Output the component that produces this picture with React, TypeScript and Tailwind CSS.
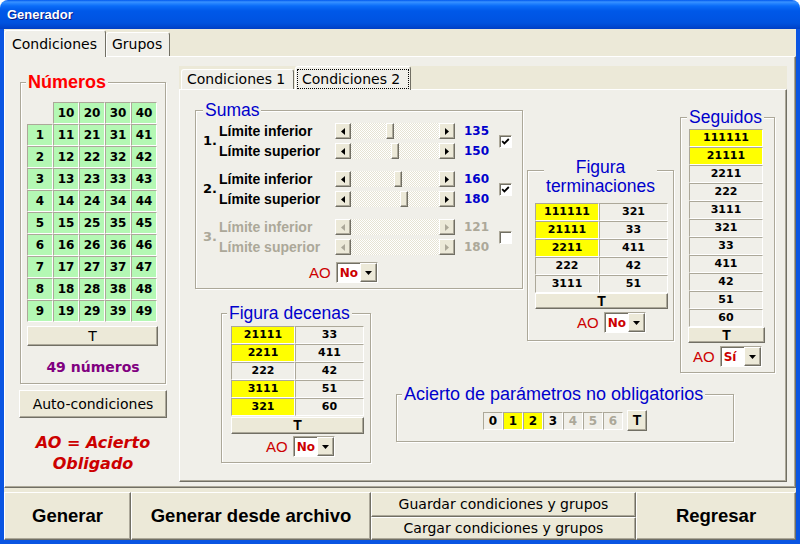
import React from "react";

const DJ = "font-['DejaVu_Sans',sans-serif]";
const LS = "font-['Liberation_Sans',Arial,sans-serif]";
const RAISED =
  "border border-t-white border-l-white border-r-[#716F64] border-b-[#716F64] shadow-[inset_-1px_-1px_0_#ACA899]";
const SUNKEN =
  "border border-t-[#ACA899] border-l-[#ACA899] border-r-white border-b-white";
const FRAME =
  "min-w-0 border border-[#ACA899] shadow-[inset_1px_1px_0_#ffffff,1px_1px_0_#ffffff]";
const LEGEND =
  "bg-[#F0EFE9] px-[2px] leading-[18px] text-[17.5px] text-[#0000CC] font-['Liberation_Sans',Arial,sans-serif]";

function ArrowBtn({ dir, disabled }: { dir: "l" | "r"; disabled?: boolean }) {
  return (
    <div className={`w-[16px] h-[16px] shrink-0 bg-[#ECE9D8] ${RAISED} flex items-center justify-center`}>
      <svg width="4" height="7" viewBox="0 0 4 7">
        <polygon
          points={dir === "l" ? "0,3.5 4,0 4,7" : "4,3.5 0,0 0,7"}
          fill={disabled ? "#ACA899" : "#000000"}
        />
      </svg>
    </div>
  );
}

function HScroll({ thumb, disabled }: { thumb?: number; disabled?: boolean }) {
  return (
    <div className="flex h-[16px] w-[120px] shrink-0">
      <ArrowBtn dir="l" disabled={disabled} />
      <div className="flex-1 flex bg-[image:repeating-conic-gradient(#ffffff_0%_25%,#E6E3D3_0%_50%)] bg-[length:2px_2px]">
        {thumb !== undefined && (
          <div className={`w-[8px] h-[16px] bg-[#ECE9D8] ${RAISED}`} style={{ marginLeft: thumb }} />
        )}
      </div>
      <ArrowBtn dir="r" disabled={disabled} />
    </div>
  );
}

function Check({ checked }: { checked?: boolean }) {
  return (
    <div className={`w-[13px] h-[13px] shrink-0 ${SUNKEN} shadow-[inset_1px_1px_0_#716F64] bg-white flex items-center justify-center`}>
      {checked && (
        <svg width="9" height="9" viewBox="0 0 9 9">
          <polyline points="1.2,4.2 3.4,6.4 7.8,2" fill="none" stroke="#000" strokeWidth="1.8" />
        </svg>
      )}
    </div>
  );
}

function Combo({ value }: { value: string }) {
  return (
    <div className={`flex h-[21px] w-[42px] shrink-0 ${SUNKEN} shadow-[inset_1px_1px_0_#716F64] bg-white`}>
      <div className={`flex-1 flex items-center pl-[3px] text-[#CC0000] font-bold text-[12px] ${DJ}`}>{value}</div>
      <div className={`w-[17px] bg-[#ECE9D8] ${RAISED} flex items-center justify-center`}>
        <svg width="7" height="4" viewBox="0 0 7 4">
          <polygon points="0,0 7,0 3.5,4" fill="#000" />
        </svg>
      </div>
    </div>
  );
}

function AO({ value, pl }: { value: string; pl: string }) {
  return (
    <div className={`flex items-center gap-[5px] ${pl}`}>
      <span className={`${LS} text-[15px] text-[#CC0000] leading-none`}>AO</span>
      <Combo value={value} />
    </div>
  );
}

function SumRow({
  label,
  thumb,
  value,
  disabled,
}: {
  label: string;
  thumb?: number;
  value: string;
  disabled?: boolean;
}) {
  return (
    <div className="flex items-center h-[20px]">
      <div className={`w-[116px] ${LS} font-bold text-[14px] ${disabled ? "text-[#ACA899]" : "text-black"}`}>{label}</div>
      <HScroll thumb={thumb} disabled={disabled} />
      <div className={`ml-[9px] w-[35px] ${DJ} font-bold text-[12px] ${disabled ? "text-[#ACA899]" : "text-[#0000CC]"}`}>
        {value}
      </div>
    </div>
  );
}

function SumGroup({
  n,
  a,
  b,
  checked,
  disabled,
}: {
  n: string;
  a: [number | undefined, string];
  b: [number | undefined, string];
  checked?: boolean;
  disabled?: boolean;
}) {
  return (
    <div className="flex items-center h-[40px]">
      <div className={`w-[23px] pl-[7px] ${DJ} font-bold text-[13px] ${disabled ? "text-[#ACA899]" : "text-black"}`}>{n}</div>
      <div className="flex flex-col">
        <SumRow label="Límite inferior" thumb={a[0]} value={a[1]} disabled={disabled} />
        <SumRow label="Límite superior" thumb={b[0]} value={b[1]} disabled={disabled} />
      </div>
      <Check checked={checked} />
    </div>
  );
}

function FigTable({ rows }: { rows: [string, string, boolean][] }) {
  return (
    <div className="flex flex-col w-[133px]">
      {rows.map(([a, b, y], i) => (
        <div key={i} className="flex h-[18px]">
          <div
            className={`w-[64px] ${SUNKEN} ${y ? "bg-[#FFFF00]" : "bg-[#F0EFE9]"} flex items-center justify-center ${DJ} font-bold text-[11px] text-black`}
          >
            {a}
          </div>
          <div className={`flex-1 ${SUNKEN} bg-[#F0EFE9] flex items-center justify-center ${DJ} font-bold text-[11px] text-black`}>
            {b}
          </div>
        </div>
      ))}
    </div>
  );
}

function TBtn({ w, h }: { w: string; h: string }) {
  return (
    <div className={`${w} ${h} bg-[#ECE9D8] ${RAISED} flex items-center justify-center ${LS} font-bold text-[14px] text-black`}>
      T
    </div>
  );
}

export default function App() {
  const numRows: (number | null)[][] = [[null, 10, 20, 30, 40]];
  for (let r = 1; r <= 9; r++) numRows.push([r, 10 + r, 20 + r, 30 + r, 40 + r]);
  const cells = numRows.flat();

  const seguidos: [string, boolean][] = [
    ["111111", true],
    ["21111", true],
    ["2211", false],
    ["222", false],
    ["3111", false],
    ["321", false],
    ["33", false],
    ["411", false],
    ["42", false],
    ["51", false],
    ["60", false],
  ];

  return (
    <div className={`w-[800px] h-[544px] bg-white overflow-hidden ${DJ} text-black`}>
      <div className="w-[800px] h-[544px] flex flex-col rounded-t-[8px] overflow-hidden">
        {/* Title bar */}
        <div className="h-[29px] shrink-0 flex items-center pl-[7px] bg-[image:linear-gradient(to_bottom,#0058EE_0px,#3A93FF_2px,#2A88FF_3px,#0A6CF8_6px,#0058E8_11px,#0055E4_18px,#0052DE_23px,#0049D2_26px,#003FC4_29px)]">
          <span className={`${LS} font-bold text-[13px] text-white [text-shadow:1px_1px_0_#0A1883]`}>Generador</span>
        </div>

        {/* Window frame */}
        <div className="flex-1 flex flex-col bg-[#0A55E2] px-[4px] pb-[4px]">
          <div className="flex-1 flex flex-col bg-[#ECE9D8]">
            {/* Outer tabs */}
            <div className="flex items-end h-[27px] shrink-0">
              <div className="relative z-10 -mb-px h-[27px] w-[102px] bg-[#F0EFE9] border-t border-l border-r border-t-white border-l-white border-r-[#716F64] rounded-t-[3px] flex items-center pl-[7px] text-[14px]">
                Condiciones
              </div>
              <div className="h-[24px] w-[64px] bg-[#F0EFE9] border-t border-l border-r border-t-white border-l-white border-r-[#716F64] rounded-t-[3px] flex items-center pl-[5px] text-[14px]">
                Grupos
              </div>
            </div>

            {/* Outer panel */}
            <div className="h-[432px] shrink-0 bg-[#F0EFE9] border border-t-white border-l-white border-r-[#716F64] border-b-[#716F64] shadow-[inset_-1px_-1px_0_#ACA899] flex">
              {/* Left column */}
              <div className="ml-[14px] w-[148px] pt-[15px] flex flex-col">
                <fieldset className={`${FRAME} ml-[1px] w-[146px] pb-[6px]`}>
                  <legend className={`ml-[5px] px-[2px] bg-[#F0EFE9] ${LS} font-bold text-[18px] leading-[20px] text-[#FF0000]`}>
                    Números
                  </legend>
                  <div className="ml-[6px] mt-[10px] grid grid-cols-[repeat(5,26px)]">
                    {cells.map((c, i) =>
                      c === null ? (
                        <div key={i} className="h-[22px]" />
                      ) : (
                        <div
                          key={i}
                          className={`h-[22px] ${SUNKEN} bg-[#B4F8B4] flex items-center justify-center font-bold text-[12px] text-black`}
                        >
                          {c}
                        </div>
                      )
                    )}
                  </div>
                  <div className={`ml-[6px] mt-[4px] w-[131px] h-[20px] bg-[#ECE9D8] ${RAISED} flex items-center justify-center text-[14px]`}>
                    T
                  </div>
                  <div className="mt-[11px] h-[20px] flex items-center justify-center font-bold text-[14px] text-[#800080]">
                    49 números
                  </div>
                </fieldset>
                <div className={`mt-[6px] w-[148px] h-[28px] bg-[#ECE9D8] ${RAISED} flex items-center justify-center text-[14px]`}>
                  Auto-condiciones
                </div>
                <div className="mt-[14px] text-center font-bold italic text-[16px] leading-[21px] text-[#CC0000]">
                  AO = Acierto
                  <br />
                  Obligado
                </div>
              </div>

              {/* Inner tab control */}
              <div className="ml-[12px] mt-[9px] w-[608px] flex flex-col">
                <div className="flex items-end h-[23px] bg-[#ECE9D8]">
                  <div className="ml-[2px] h-[20px] w-[113px] bg-[#F0EFE9] border-t border-l border-r border-t-white border-l-white border-r-[#716F64] rounded-t-[3px] flex items-center pl-[5px] text-[14px]">
                    Condiciones 1
                  </div>
                  <div className="ml-[1px] relative z-10 -mb-px h-[24px] w-[116px] bg-[#F0EFE9] border-t border-l border-r border-t-white border-l-white border-r-[#716F64] rounded-t-[3px] flex px-[1px] pt-[2px] pb-[1px]">
                    <span className="flex-1 flex items-center border border-dotted border-black pl-[4px] text-[14px]">
                      Condiciones 2
                    </span>
                  </div>
                </div>
                <div className="h-[393px] bg-[#F0EFE9] border border-t-white border-l-white border-r-[#716F64] border-b-[#716F64] shadow-[inset_-1px_-1px_0_#ACA899] grid grid-cols-[15px_26px_150px_25px_127px_4px_147px_6px_54px_41px] grid-rows-[11px_7px_50px_131px_15px_37px_32px_12px_57px_21px] content-start justify-start">
                  {/* Sumas */}
                  <fieldset className={`${FRAME} col-start-2 col-end-6 row-start-2 row-end-5`}>
                    <legend className={`ml-[7px] ${LEGEND}`}>Sumas</legend>
                    <div className="flex flex-col pt-[2px]">
                      <SumGroup n="1." a={[35, "135"]} b={[40, "150"]} checked />
                      <div className="h-[8px]" />
                      <SumGroup n="2." a={[43, "160"]} b={[49, "180"]} checked />
                      <div className="h-[8px]" />
                      <SumGroup n="3." a={[undefined, "121"]} b={[undefined, "180"]} disabled />
                      <div className="mt-[5px]">
                        <AO value="No" pl="pl-[113px]" />
                      </div>
                    </div>
                  </fieldset>

                  {/* Figura terminaciones */}
                  <fieldset className={`${FRAME} col-start-7 col-end-8 row-start-4 row-end-7`}>
                    <legend className={`mx-auto ${LEGEND}`}>
                      <div className="-mb-[14px] leading-[19px] text-center">
                        Figura
                        <br />
                        terminaciones
                      </div>
                    </legend>
                    <div className="pl-[7px] pt-[21px] flex flex-col">
                      <FigTable
                        rows={[
                          ["111111", "321", true],
                          ["21111", "33", true],
                          ["2211", "411", true],
                          ["222", "42", false],
                          ["3111", "51", false],
                        ]}
                      />
                      <TBtn w="w-[133px]" h="h-[16px]" />
                      <div className="mt-[3px]">
                        <AO value="No" pl="pl-[42px]" />
                      </div>
                    </div>
                  </fieldset>

                  {/* Seguidos */}
                  <fieldset className={`${FRAME} col-start-9 col-end-11 row-start-3 row-end-8`}>
                    <legend className={`ml-[6px] ${LEGEND}`}>Seguidos</legend>
                    <div className="pt-[3px] flex flex-col">
                      <div className="ml-[8px] w-[74px] flex flex-col">
                        {seguidos.map(([t, y], i) => (
                          <div
                            key={i}
                            className={`h-[18px] ${SUNKEN} ${y ? "bg-[#FFFF00]" : "bg-[#F0EFE9]"} flex items-center justify-center font-bold text-[11px] text-black`}
                          >
                            {t}
                          </div>
                        ))}
                      </div>
                      <div className="ml-[7px]">
                        <TBtn w="w-[77px]" h="h-[16px]" />
                      </div>
                      <div className="mt-[3px]">
                        <AO value="Sí" pl="pl-[12px]" />
                      </div>
                    </div>
                  </fieldset>

                  {/* Figura decenas */}
                  <fieldset className={`${FRAME} col-start-3 col-end-4 row-start-6 row-end-11`}>
                    <legend className={`ml-[5px] ${LEGEND}`}>Figura decenas</legend>
                    <div className="pl-[9px] pt-[4px] flex flex-col">
                      <FigTable
                        rows={[
                          ["21111", "33", true],
                          ["2211", "411", true],
                          ["222", "42", false],
                          ["3111", "51", true],
                          ["321", "60", true],
                        ]}
                      />
                      <div className="mt-[1px]">
                        <TBtn w="w-[133px]" h="h-[17px]" />
                      </div>
                      <div className="mt-[2px]">
                        <AO value="No" pl="pl-[35px]" />
                      </div>
                    </div>
                  </fieldset>

                  {/* Acierto */}
                  <fieldset className={`${FRAME} col-start-5 col-end-10 row-start-9 row-end-10`}>
                    <legend className={`ml-[5px] ${LEGEND} text-[18px]`}>Acierto de parámetros no obligatorios</legend>
                    <div className="pt-[7px] flex items-center justify-center">
                      {["0", "1", "2", "3", "4", "5", "6"].map((d, i) => (
                        <div
                          key={d}
                          className={`w-[20px] h-[18px] ${SUNKEN} ${i === 1 || i === 2 ? "bg-[#FFFF00]" : "bg-[#F0EFE9]"} flex items-center justify-center font-bold text-[12px] ${i >= 4 ? "text-[#ACA899]" : "text-black"}`}
                        >
                          {d}
                        </div>
                      ))}
                      <div className="ml-[4px]">
                        <TBtn w="w-[20px]" h="h-[21px]" />
                      </div>
                    </div>
                  </fieldset>
                </div>
              </div>
            </div>

            {/* Bottom buttons */}
            <div className="mt-[4px] h-[48px] flex shrink-0">
              <div className={`w-[127px] bg-[#ECE9D8] ${RAISED} flex items-center justify-center ${LS} font-bold text-[18.5px]`}>
                Generar
              </div>
              <div className={`w-[240px] bg-[#ECE9D8] ${RAISED} flex items-center justify-center ${LS} font-bold text-[18.5px]`}>
                Generar desde archivo
              </div>
              <div className="w-[265px] flex flex-col">
                <div className={`h-[25px] bg-[#ECE9D8] ${RAISED} flex items-center justify-center text-[14px]`}>
                  Guardar condiciones y grupos
                </div>
                <div className={`h-[23px] bg-[#ECE9D8] ${RAISED} flex items-center justify-center text-[14px]`}>
                  Cargar condiciones y grupos
                </div>
              </div>
              <div className={`w-[160px] bg-[#ECE9D8] ${RAISED} flex items-center justify-center ${LS} font-bold text-[18.5px]`}>
                Regresar
              </div>
            </div>
          </div>
        </div>
      </div>
    </div>
  );
}
